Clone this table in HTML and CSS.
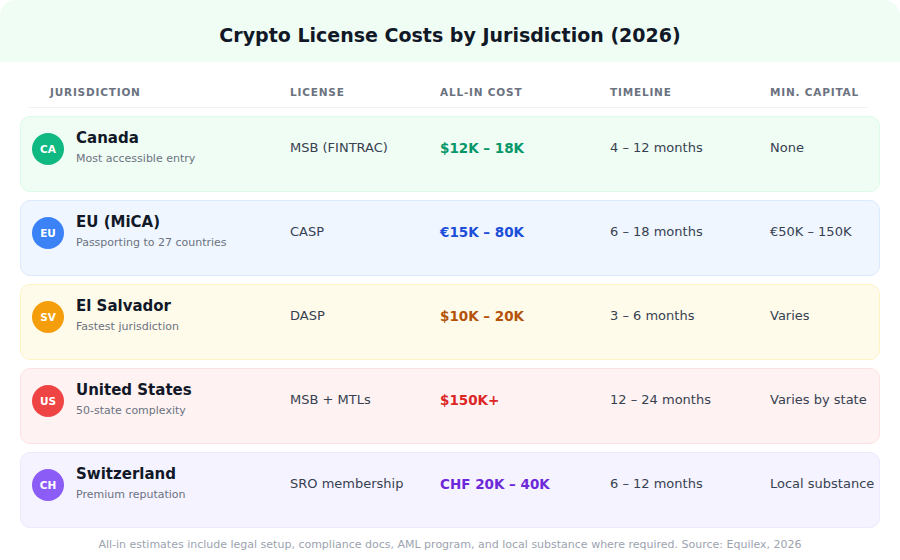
FILE: index.html
```html
<!DOCTYPE html>
<html>
<head>
<meta charset="utf-8">
<link rel="stylesheet" href="styles.css">
</head>
<body>
<div class="card">
  <div class="title-band"><h1 class="title">Crypto License Costs by Jurisdiction (2026)</h1></div>
  <div class="table">
    <div class="thead">
      <div class="th">Jurisdiction</div>
      <div class="th">License</div>
      <div class="th">All-in cost</div>
      <div class="th">Timeline</div>
      <div class="th">Min. capital</div>
    </div>
    <div class="rows">
      <div class="row green">
        <div class="juris"><span class="badge">CA</span><div class="names"><div class="name">Canada</div><div class="sub">Most accessible entry</div></div></div>
        <div class="cell">MSB (FINTRAC)</div>
        <div class="cell cost">$12K – 18K</div>
        <div class="cell">4 – 12 months</div>
        <div class="cell">None</div>
      </div>
      <div class="row blue">
        <div class="juris"><span class="badge">EU</span><div class="names"><div class="name">EU (MiCA)</div><div class="sub">Passporting to 27 countries</div></div></div>
        <div class="cell">CASP</div>
        <div class="cell cost">€15K – 80K</div>
        <div class="cell">6 – 18 months</div>
        <div class="cell">€50K – 150K</div>
      </div>
      <div class="row amber">
        <div class="juris"><span class="badge">SV</span><div class="names"><div class="name">El Salvador</div><div class="sub">Fastest jurisdiction</div></div></div>
        <div class="cell">DASP</div>
        <div class="cell cost">$10K – 20K</div>
        <div class="cell">3 – 6 months</div>
        <div class="cell">Varies</div>
      </div>
      <div class="row red">
        <div class="juris"><span class="badge">US</span><div class="names"><div class="name">United States</div><div class="sub">50-state complexity</div></div></div>
        <div class="cell">MSB + MTLs</div>
        <div class="cell cost">$150K+</div>
        <div class="cell">12 – 24 months</div>
        <div class="cell">Varies by state</div>
      </div>
      <div class="row violet">
        <div class="juris"><span class="badge">CH</span><div class="names"><div class="name">Switzerland</div><div class="sub">Premium reputation</div></div></div>
        <div class="cell">SRO membership</div>
        <div class="cell cost">CHF 20K – 40K</div>
        <div class="cell">6 – 12 months</div>
        <div class="cell">Local substance</div>
      </div>
    </div>
  </div>
  <p class="footnote">All-in estimates include legal setup, compliance docs, AML program, and local substance where required. Source: Equilex, 2026</p>
</div>
</body>
</html>
```

FILE: styles.css
```css
* { box-sizing: border-box; }
html, body { margin: 0; padding: 0; background: #ffffff; }
body {
  font-family: "DejaVu Sans", Verdana, sans-serif;
  width: 900px;
  height: 560px;
  overflow: hidden;
}
.card {
  width: 900px;
  height: 560px;
  background: #ffffff;
  border-radius: 16px;
}
.title-band {
  height: 62px;
  background: #f0fdf4;
  border-radius: 16px 16px 0 0;
  display: flex;
  align-items: center;
  justify-content: center;
}
.title {
  margin: 0;
  font-size: 19px;
  font-weight: 700;
  color: #111827;
  padding-top: 8px;
}
.table {
  padding: 0 20px;
}
.thead {
  display: grid;
  grid-template-columns: 240px 150px 170px 160px 1fr;
  margin: 0 12px 0 8px;
  padding: 24px 0 0 22px;
  height: 46px;
  border-bottom: 1px solid #f1f2f4;
}
.th {
  font-size: 10.5px;
  font-weight: 700;
  letter-spacing: 0.8px;
  text-transform: uppercase;
  color: #6b7280;
  white-space: nowrap;
}
.rows {
  margin-top: 8px;
  display: flex;
  flex-direction: column;
  gap: 8px;
}
.row {
  height: 76px;
  border-radius: 10px;
  border: 1px solid;
  display: grid;
  grid-template-columns: 258px 150px 170px 160px 1fr;
  align-items: start;
  padding: 15px 0 0 11px;
}
.juris {
  display: flex;
  align-items: center;
  gap: 12px;
}
.badge {
  width: 32px;
  height: 32px;
  border-radius: 50%;
  color: #ffffff;
  font-size: 10.5px;
  font-weight: 700;
  display: flex;
  align-items: center;
  justify-content: center;
  flex: none;
}
.names { display: flex; flex-direction: column; }
.name {
  font-size: 15px;
  font-weight: 700;
  color: #111827;
  line-height: 18px;
  margin-top: -3px;
}
.sub {
  font-size: 11px;
  color: #6b7280;
  line-height: 14px;
  margin-top: 5px;
}
.cell {
  font-size: 13px;
  color: #374151;
  line-height: 32px;
  white-space: nowrap;
}
.cost { font-weight: 700; font-size: 13.5px; }
.green { background: #f0fdf4; border-color: #dcfce7; }
.green .badge { background: #10b981; }
.green .cost { color: #059669; }
.blue { background: #eff6ff; border-color: #dbeafe; }
.blue .badge { background: #3b82f6; }
.blue .cost { color: #1d4ed8; }
.amber { background: #fffbeb; border-color: #fef3c7; }
.amber .badge { background: #f59e0b; }
.amber .cost { color: #b45309; }
.red { background: #fef2f2; border-color: #fee2e2; }
.red .badge { background: #ef4444; }
.red .cost { color: #dc2626; }
.violet { background: #f5f3ff; border-color: #ede9fe; }
.violet .badge { background: #8b5cf6; }
.violet .cost { color: #6d28d9; }
.footnote {
  margin: 10px 0 0;
  text-align: center;
  font-size: 11px;
  color: #9ca3af;
}
```
